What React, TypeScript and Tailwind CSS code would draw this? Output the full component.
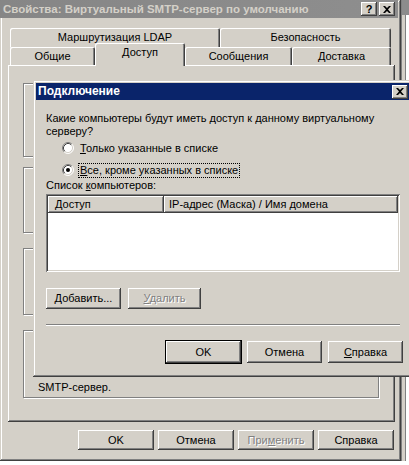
import React from "react";

const raised =
  "shadow-[inset_-1px_-1px_0_#404040,inset_1px_1px_0_#ffffff,inset_-2px_-2px_0_#808080]";
const windowEdge =
  "shadow-[inset_-1px_-1px_0_#404040,inset_1px_1px_0_#d4d0c8,inset_-2px_-2px_0_#808080,inset_2px_2px_0_#ffffff]";
const sunken =
  "shadow-[inset_1px_1px_0_#808080,inset_-1px_-1px_0_#ffffff,inset_2px_2px_0_#404040,inset_-2px_-2px_0_#d4d0c8]";
const tabEdge =
  "shadow-[inset_1px_1px_0_#ffffff,inset_-1px_0_0_#404040,inset_-2px_0_0_#808080] rounded-t-[2px]";
const groupEdge = "border border-[#808080] shadow-[1px_1px_0_#ffffff,inset_1px_1px_0_#ffffff]";

const Btn = ({
  children,
  className = "",
  disabled = false,
  def = false,
}: {
  children: React.ReactNode;
  className?: string;
  disabled?: boolean;
  def?: boolean;
}) => (
  <div
    className={`flex items-center justify-center bg-[#d4d0c8] ${raised} ${def ? "outline outline-1 outline-black" : ""} ${
      disabled ? "text-[#808080] [text-shadow:1px_1px_0_#ffffff]" : "text-black"
    } ${className}`}
  >
    {children}
  </div>
);

const Radio = ({ checked }: { checked?: boolean }) => (
  <svg width="12" height="12" viewBox="0 0 12 12" className="shrink-0">
    <circle cx="6" cy="6" r="5" fill="#ffffff" />
    <path d="M2.11 9.89 A5.5 5.5 0 0 1 9.89 2.11" fill="none" stroke="#808080" />
    <path d="M9.89 2.11 A5.5 5.5 0 0 1 2.11 9.89" fill="none" stroke="#ffffff" />
    <path d="M2.82 9.18 A4.5 4.5 0 0 1 9.18 2.82" fill="none" stroke="#404040" />
    <path d="M9.18 2.82 A4.5 4.5 0 0 1 2.82 9.18" fill="none" stroke="#d4d0c8" />
    {checked && <circle cx="6" cy="6" r="2" fill="#000000" />}
  </svg>
);

const CloseGlyph = () => (
  <svg width="8" height="7" viewBox="0 0 8 7">
    <path d="M0 0 L2 0 L4 2 L6 0 L8 0 L5 3.5 L8 7 L6 7 L4 5 L2 7 L0 7 L3 3.5 Z" fill="#000000" />
  </svg>
);

export default function App() {
  return (
    <div className="relative w-[409px] h-[465px] overflow-hidden bg-white font-['Liberation_Sans',Arial,sans-serif] text-[11px] leading-[13px] text-black">
      <div className="flex h-[461px]">
        {/* main properties window */}
        <div className={`w-[401px] h-full bg-[#d4d0c8] flex flex-col ${windowEdge}`}>
          <div className="h-[18px] mr-[3px] flex items-center pl-[3px] pr-[3px] bg-gradient-to-r from-[#868686] to-[#8e8e8e]">
            <span className="flex-1 font-bold text-[11.5px] text-[#d4d0c8] whitespace-nowrap">
              Свойства: Виртуальный SMTP-сервер по умолчанию
            </span>
            <div className={`w-[16px] h-[14px] flex items-center justify-center bg-[#d4d0c8] font-bold text-[11px] ${raised}`}>
              ?
            </div>
            <div className={`w-[16px] h-[14px] ml-[2px] flex items-center justify-center bg-[#d4d0c8] ${raised}`}>
              <CloseGlyph />
            </div>
          </div>

          <div className="pl-[8px] pr-[6px] pt-[10px]">
            {/* back row of tabs */}
            <div className="flex pl-[2px] h-[19px]">
              <div className={`w-[210px] h-[24px] flex justify-center pt-[3px] bg-[#d4d0c8] ${tabEdge}`}>
                Маршрутизация LDAP
              </div>
              <div className={`w-[171px] h-[24px] flex justify-center pt-[3px] bg-[#d4d0c8] ${tabEdge}`}>
                Безопасность
              </div>
            </div>
            {/* front row of tabs */}
            <div className="relative z-10 flex items-end pl-[2px] h-[18px]">
              <div className={`w-[85px] h-[18px] flex justify-center pt-[3px] bg-[#d4d0c8] ${tabEdge}`}>Общие</div>
              <div className={`w-[90px] h-[23px] -mb-[1px] flex justify-center pt-[3px] bg-[#d4d0c8] ${tabEdge}`}>
                Доступ
              </div>
              <div className={`w-[107px] h-[18px] flex justify-center pt-[3px] bg-[#d4d0c8] ${tabEdge}`}>Сообщения</div>
              <div className={`w-[99px] h-[18px] flex justify-center pt-[3px] bg-[#d4d0c8] ${tabEdge}`}>Доставка</div>
            </div>

            {/* tab page */}
            <div className={`w-[387px] h-[357px] pl-[15px] pr-[16px] pt-[18px] flex flex-col ${raised}`}>
              <div className={`h-[74px] ${groupEdge}`} />
              <div className={`h-[66px] mt-[10px] ${groupEdge}`} />
              <div className={`h-[67px] mt-[15px] ${groupEdge}`} />
              <div className={`h-[68px] mt-[15px] flex flex-col justify-end pl-[14px] pb-[3px] ${groupEdge}`}>
                <span>SMTP-сервер.</span>
              </div>
            </div>
          </div>

          <div className="flex gap-[4px] pl-[78px] mt-[8px]">
            <Btn className="w-[76px] h-[20px]">OK</Btn>
            <Btn className="w-[76px] h-[20px]">Отмена</Btn>
            <Btn className="w-[76px] h-[20px]" disabled>
              <span>
                При<u>м</u>енить
              </span>
            </Btn>
            <Btn className="w-[76px] h-[20px]">Справка</Btn>
          </div>
        </div>

        {/* edge of the window behind */}
        <div className="w-[8px] flex flex-col border-l border-[#808080]">
          <div className="h-[15px] bg-[#8c8c8c]" />
          <div className="flex-1 bg-[#d4d0c8] border-r border-[#808080] mr-[3px]" />
        </div>
      </div>

      {/* modal dialog */}
      <div className={`absolute left-[33px] top-[80px] w-[380px] h-[297px] bg-[#d4d0c8] p-[3px] flex flex-col ${windowEdge}`}>
        <div className="h-[17px] flex items-center pl-[2px] pr-[2px] bg-[#0a246a]">
          <span className="flex-1 font-bold text-white text-[12px]">Подключение</span>
          <div className={`w-[16px] h-[14px] flex items-center justify-center bg-[#d4d0c8] ${raised}`}>
            <CloseGlyph />
          </div>
        </div>

        <div className="pl-[10px] pt-[12px] flex flex-col">
          <p>Какие компьютеры будут иметь доступ к данному виртуальному</p>
          <p>серверу?</p>

          <div className="flex items-center h-[14px] mt-[3px] pl-[16px] gap-[5px]">
            <Radio />
            <span className="px-[1px]">
              <u>Т</u>олько указанные в списке
            </span>
          </div>
          <div className="flex items-center h-[14px] mt-[8px] pl-[16px] gap-[4px]">
            <Radio checked />
            <span className="px-[1px] border border-dotted border-black">
              <u>В</u>се, кроме указанных в списке
            </span>
          </div>

          <p className="mt-[2px]">
            Список <u>к</u>омпьютеров:
          </p>

          <div className={`w-[354px] h-[78px] mt-[2px] bg-white p-[2px] ${sunken}`}>
            <div className="flex h-[17px]">
              <div className={`w-[116px] bg-[#d4d0c8] flex items-center pl-[7px] ${raised}`}>Доступ</div>
              <div className={`flex-1 bg-[#d4d0c8] flex items-center pl-[5px] ${raised}`}>
                IP-адрес (Маска) / Имя домена
              </div>
            </div>
          </div>

          <div className="flex gap-[7px] mt-[16px]">
            <Btn className="w-[75px] h-[21px]">
              <span>
                <u>Д</u>обавить...
              </span>
            </Btn>
            <Btn className="w-[73px] h-[21px]" disabled>
              <span>
                <u>У</u>далить
              </span>
            </Btn>
          </div>

          <div className="w-[354px] h-[2px] mt-[15px] border-t border-[#808080] border-b border-b-white" />

          <div className="flex gap-[6px] mt-[15px] pl-[120px]">
            <Btn className="w-[75px] h-[22px]" def>
              OK
            </Btn>
            <Btn className="w-[75px] h-[22px]">Отмена</Btn>
            <Btn className="w-[75px] h-[22px]">
              <span>
                <u>С</u>правка
              </span>
            </Btn>
          </div>
        </div>
      </div>
    </div>
  );
}
